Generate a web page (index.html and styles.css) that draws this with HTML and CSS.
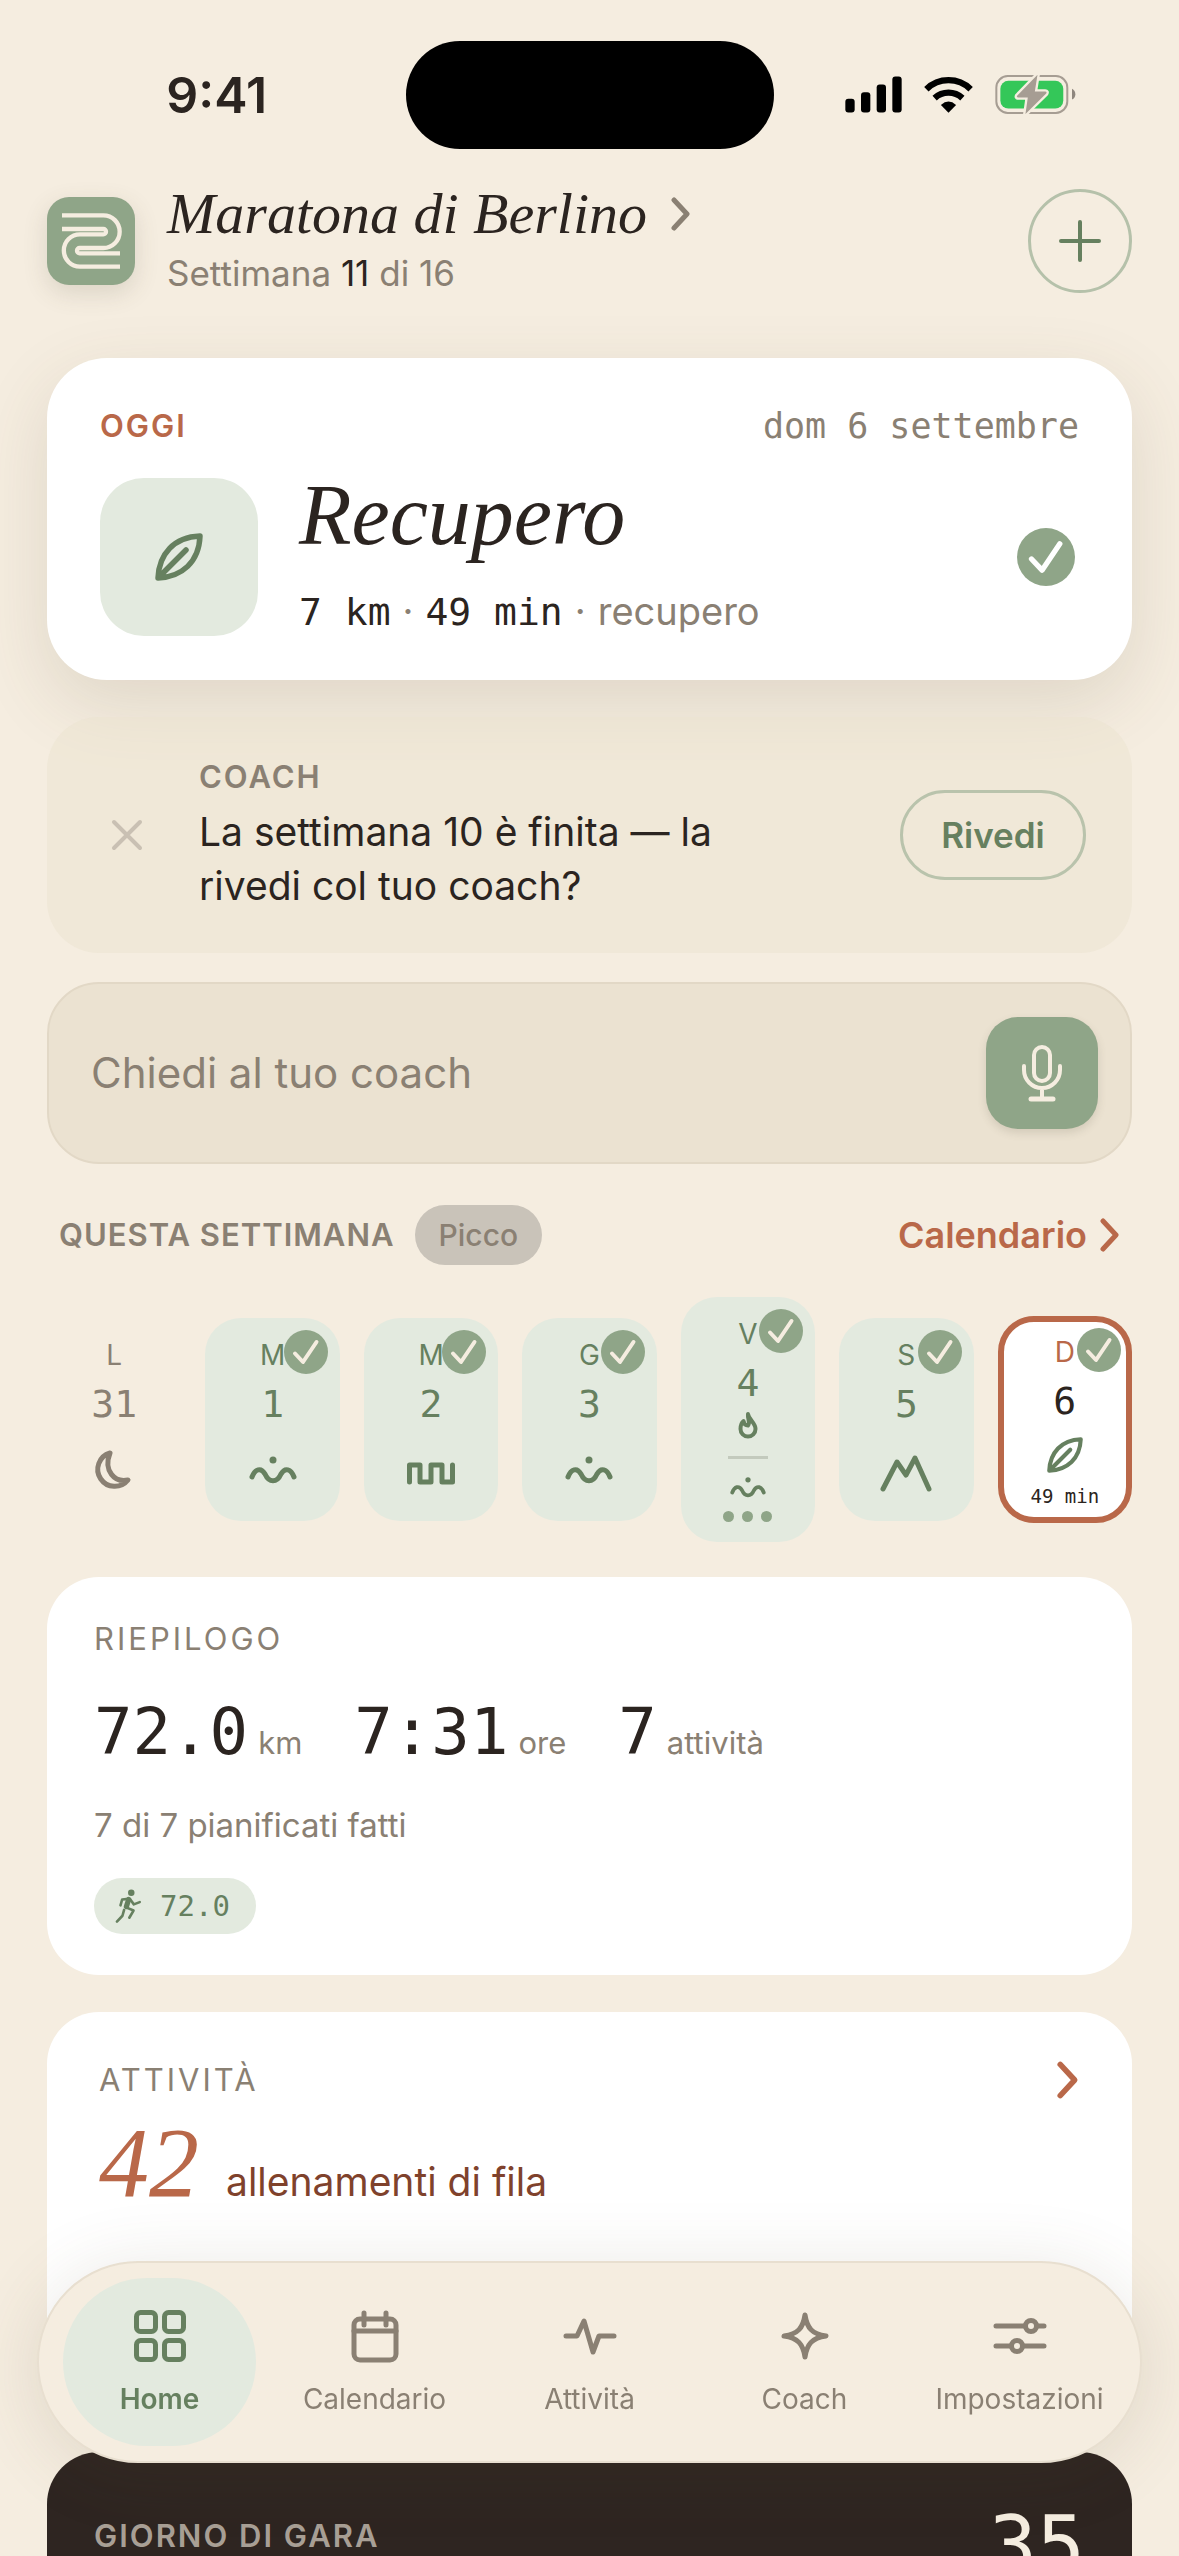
FILE: index.html
```html
<!DOCTYPE html>
<html lang="it">
<head>
<meta charset="utf-8">
<meta name="viewport" content="width=device-width, initial-scale=1">
<title>Maratona di Berlino</title>
<link rel="stylesheet" href="styles.css">
</head>
<body>
<svg class="defs" width="0" height="0" aria-hidden="true">
  <symbol id="check" viewBox="0 0 44 44"><path d="M11 23.500l8 8.500 13.500-20" fill="none" stroke="currentColor" stroke-width="4" stroke-linecap="round" stroke-linejoin="round"/></symbol>
  <symbol id="leaf" viewBox="0 0 48 48"><path d="M3 45C4 21 19 4 45 3c-1 26-18 41-42 42ZM5 43l26-26" fill="none" stroke="currentColor" stroke-width="5.500" stroke-linecap="round" stroke-linejoin="round"/></symbol>
  <symbol id="wave" viewBox="0 0 48 32"><circle cx="24" cy="5" r="3.500" fill="currentColor"/><path d="M3 22C6 14 12 12 16 19c4 9 12 9 16 0 4-7 10-5 13 3" fill="none" stroke="currentColor" stroke-width="5" stroke-linecap="round"/></symbol>
  <symbol id="chevron" viewBox="0 0 20 36"><path d="M3 4l13 14L3 32" fill="none" stroke="currentColor" stroke-width="5" stroke-linecap="round" stroke-linejoin="round"/></symbol>
</svg>

<div class="status">
  <time class="status-time">9:41</time>
  <div class="island"></div>
  <div class="status-icons">
    <svg class="cell" viewBox="46 50 171 110" aria-label="Segnale"><rect x="47" y="118" width="28" height="41" rx="9"/><rect x="94" y="98" width="28" height="61" rx="9"/><rect x="141" y="75" width="28" height="84" rx="9"/><rect x="188" y="51" width="28" height="108" rx="9"/></svg>
    <svg class="wifi" viewBox="280 50 152 112" aria-label="Wi-Fi"><g fill="none" stroke="#000" stroke-width="19"><path d="M289 90A96 96 0 0 1 423 90"/><path d="M314 117A62 62 0 0 1 398 117"/></g><path d="M333 138Q356 117 379 138L356 161Z"/></svg>
    <svg class="battery" viewBox="496 44 242 122" aria-label="Batteria in carica"><rect x="500" y="50" width="212" height="110" rx="34" fill="none" stroke="#a69d93" stroke-width="6"/><rect x="512" y="64" width="188" height="83" rx="24" fill="#34c759"/><path d="M726 88q10 5 10 16t-10 16z" fill="#8f877e"/><path d="M623 46L562 109q-2 5 3 5h29l-7 49 62-61q3-6-3-6h-31z" fill="#a69d93" stroke="#f5ede0" stroke-width="14" paint-order="stroke" stroke-linejoin="round"/></svg>
  </div>
</div>

<main class="page">
  <header class="header">
    <svg class="logo" viewBox="51 48 264 264" aria-hidden="true"><g fill="none" stroke="#f5ede0" stroke-width="13"><path d="M96 103H220A49 49 0 0 1 220 201H149A8 8 0 0 0 149 217H270"/><path d="M96 144H220A8 8 0 0 1 220 160H150A48 48 0 0 0 150 257H270"/></g></svg>
    <div class="plan">
      <h1 class="plan-title"><a href="#piano">Maratona di Berlino <svg class="chev" aria-hidden="true"><use href="#chevron"/></svg></a></h1>
      <p class="plan-week">Settimana <b>11</b> di 16</p>
    </div>
    <button class="add" aria-label="Aggiungi"><svg viewBox="0 0 44 44" aria-hidden="true"><path d="M22 3v38M3 22h38" stroke="currentColor" stroke-width="4" stroke-linecap="round"/></svg></button>
  </header>

  <section class="card today">
    <div class="today-top">
      <h2 class="label strong accent">OGGI</h2>
      <time class="today-date">dom 6 settembre</time>
    </div>
    <div class="today-row">
      <div class="today-tile"><svg aria-hidden="true"><use href="#leaf"/></svg></div>
      <div class="today-text">
        <h3 class="today-title">Recupero</h3>
        <p class="today-meta"><span class="mono">7 km</span><i>·</i><span class="mono">49 min</span><i>·</i><span class="muted">recupero</span></p>
      </div>
      <svg class="today-check" aria-label="Completato"><use href="#check"/></svg>
    </div>
  </section>

  <section class="coach">
    <button class="dismiss" aria-label="Chiudi"><svg viewBox="0 0 32 32" aria-hidden="true"><path d="M3 3l26 26M29 3L3 29" stroke="currentColor" stroke-width="4" stroke-linecap="round"/></svg></button>
    <div class="coach-text">
      <h2 class="label strong">COACH</h2>
      <p>La settimana 10 è finita — la rivedi col tuo coach?</p>
    </div>
    <button class="review">Rivedi</button>
  </section>

  <form class="ask">
    <input class="ask-input" type="text" placeholder="Chiedi al tuo coach" aria-label="Chiedi al tuo coach">
    <button class="mic" type="button" aria-label="Detta"><svg viewBox="0 0 56 58" fill="none" stroke="currentColor" stroke-width="4" stroke-linecap="round" aria-hidden="true"><rect x="20" y="3" width="16" height="34" rx="8"/><path d="M10 22v4a18 18 0 0 0 36 0v-4M28 44v10"/><path d="M17 55h22" stroke-width="5"/></svg></button>
  </form>

  <section>
    <div class="week-head">
      <h2 class="label strong">QUESTA SETTIMANA</h2>
      <span class="phase">Picco</span>
      <a class="week-link" href="#calendario">Calendario <svg class="chev" aria-hidden="true"><use href="#chevron"/></svg></a>
    </div>
    <ol class="week">
      <li class="day rest"><span class="dow">L</span><span class="num">31</span><svg class="day-icon" viewBox="0 0 48 48" aria-hidden="true"><path d="M20 6A17 17 0 1 0 38 33C25 36 13 24 20 6Z" fill="none" stroke="currentColor" stroke-width="5" stroke-linejoin="round"/></svg></li>
      <li class="day"><span class="dow">M</span><span class="num">1</span><svg class="day-icon" aria-hidden="true"><use href="#wave"/></svg><svg class="done" aria-label="Fatto"><use href="#check"/></svg></li>
      <li class="day"><span class="dow">M</span><span class="num">2</span><svg class="day-icon" viewBox="0 0 48 48" aria-hidden="true"><path d="M2.500 35V18H13V35H24V18H35V35H45.500V18" fill="none" stroke="currentColor" stroke-width="5" stroke-linecap="round" stroke-linejoin="round"/></svg><svg class="done" aria-label="Fatto"><use href="#check"/></svg></li>
      <li class="day"><span class="dow">G</span><span class="num">3</span><svg class="day-icon" aria-hidden="true"><use href="#wave"/></svg><svg class="done" aria-label="Fatto"><use href="#check"/></svg></li>
      <li class="day double"><span class="dow">V</span><span class="num">4</span><svg class="flame" viewBox="0 0 20 28" aria-hidden="true"><path d="M10 3C11 9 17.500 12 17.500 18A7.500 7.500 0 0 1 2.500 18C2.500 15 3 12 5.500 10C6 13 7.500 14.500 10 14.500C12.500 12 9.500 8 10 3Z" fill="none" stroke="currentColor" stroke-width="4" stroke-linejoin="round"/></svg><hr class="split"><svg class="small-wave" aria-hidden="true"><use href="#wave"/></svg><span class="dots"><i></i><i></i><i></i></span><svg class="done" aria-label="Fatto"><use href="#check"/></svg></li>
      <li class="day"><span class="dow">S</span><span class="num">5</span><svg class="day-icon wide" viewBox="0 0 52 48" aria-hidden="true"><path d="M3 42L17 15L26 28L35 11L49 42" fill="none" stroke="currentColor" stroke-width="5" stroke-linecap="round" stroke-linejoin="round"/></svg><svg class="done" aria-label="Fatto"><use href="#check"/></svg></li>
      <li class="day current" aria-current="date"><span class="dow">D</span><span class="num">6</span><svg class="day-leaf" aria-hidden="true"><use href="#leaf"/></svg><span class="dur">49 min</span><svg class="done" aria-label="Fatto"><use href="#check"/></svg></li>
    </ol>
  </section>

  <section class="card summary">
    <h2 class="label">RIEPILOGO</h2>
    <div class="stats">
      <p class="stat"><b>72.0</b><span>km</span></p>
      <p class="stat"><b>7:31</b><span>ore</span></p>
      <p class="stat"><b>7</b><span>attività</span></p>
    </div>
    <p class="planned">7 di 7 pianificati fatti</p>
    <span class="run"><svg viewBox="102 58 86 108" fill="none" stroke="currentColor" stroke-width="8" stroke-linecap="round" stroke-linejoin="round" aria-hidden="true"><circle cx="155" cy="71" r="10" fill="currentColor" stroke="none"/><path d="M122 110L127 92L146 90"/><path d="M147 92L140 114" stroke-width="16"/><path d="M152 92L163 107L181 100"/><path d="M141 117L162 126L149 148"/><path d="M133 124L128 142L111 160"/></svg>72.0</span>
  </section>

  <section class="card activity">
    <div class="activity-head">
      <h2 class="label">ATTIVITÀ</h2>
      <a href="#attivita" aria-label="Apri attività"><svg class="chev" aria-hidden="true"><use href="#chevron"/></svg></a>
    </div>
    <p class="streak"><b>42</b><span>allenamenti di fila</span></p>
  </section>

  <section class="race">
    <h2 class="label strong">GIORNO DI GARA</h2>
    <p class="race-days">35</p>
  </section>
</main>

<nav class="tabs">
  <a class="tab active" href="#home" aria-current="page"><svg viewBox="0 0 54 54" aria-hidden="true"><rect x="3.500" y="3.500" width="19" height="19" rx="4"/><rect x="31.500" y="3.500" width="19" height="19" rx="4"/><rect x="3.500" y="31.500" width="19" height="19" rx="4"/><rect x="31.500" y="31.500" width="19" height="19" rx="4"/></svg>Home</a>
  <a class="tab" href="#calendario"><svg viewBox="0 0 54 54" aria-hidden="true"><rect x="6" y="10" width="42" height="41" rx="6"/><path d="M6 22H48M16 4V16M38 4V16"/></svg>Calendario</a>
  <a class="tab" href="#attivita"><svg viewBox="0 0 54 54" aria-hidden="true"><path d="M3 27H14L21 12L30 43L36 27H51"/></svg>Attività</a>
  <a class="tab" href="#coach"><svg viewBox="0 0 54 54" aria-hidden="true"><path d="M27 6C29 19 34 25 48 27C34 29 29 35 27 48C25 35 20 29 6 27C20 25 25 19 27 6Z"/></svg>Coach</a>
  <a class="tab" href="#impostazioni"><svg viewBox="0 0 54 54" aria-hidden="true"><path d="M3 17H32M44 17H51M3 37H18M30 37H51"/><circle cx="38" cy="17" r="5.500"/><circle cx="24" cy="37" r="5.500"/></svg>Impostazioni</a>
</nav>
</body>
</html>
```
FILE: styles.css
```css
:root {
  --bg: #f5ede0;
  --ink: #2b2420;
  --muted: #8a8073;
  --sage: #8fa588;
  --green: #66805f;
  --mint: #e3eadf;
  --clay: #b96849;
  --sans: Inter, "Liberation Sans", sans-serif;
  --serif: "Liberation Serif", serif;
  --mono: "DejaVu Sans Mono", monospace;
}

* { box-sizing: border-box; }

body {
  margin: 0;
  height: 100vh;
  overflow: hidden;
  background: var(--bg);
  color: var(--ink);
  font-family: var(--sans);
  font-size: 32px;
}

h1, h2, h3, p, ol { margin: 0; padding: 0; font-weight: 400; }
ol { list-style: none; }
a { color: inherit; text-decoration: none; }
svg { display: block; flex: none; }
button {
  padding: 0;
  border: 0;
  background: none;
  font-family: inherit;
  display: flex;
  align-items: center;
  justify-content: center;
  flex: none;
}
.defs { position: absolute; }
.mono { font-family: var(--mono); }
.chev { width: 20px; height: 36px; }

/* Status bar */
.status {
  display: grid;
  grid-template-columns: 1fr 368px 1fr;
  align-items: center;
  height: 189px;
}
.status-time {
  justify-self: center;
  padding-left: 28px;
  font-size: 50px;
  font-weight: 600;
  line-height: 60px;
}
.island { height: 108px; border-radius: 54px; background: #000; }
.status-icons {
  display: flex;
  align-items: center;
  justify-content: flex-end;
  gap: 21px;
  padding-right: 103px;
}
.cell { width: 57px; height: 37px; }
.wifi { width: 51px; height: 37px; }
.battery { width: 81px; height: 41px; }

.page { padding: 0 47px; }

/* Header */
.header { display: flex; align-items: center; height: 104px; }
.logo {
  width: 88px;
  height: 88px;
  border-radius: 22px;
  background: var(--sage);
  box-shadow: 0 8px 24px rgba(90, 80, 60, .16);
}
.plan { flex: 1; padding-left: 32px; }
.plan-title {
  font: italic 58px/64px var(--serif);
}
.plan-title a { display: flex; align-items: center; gap: 24px; }
.plan-title .chev { color: var(--muted); }
.plan-week { font-size: 35px; line-height: 54px; color: var(--muted); }
.plan-week b { font-weight: 400; color: var(--ink); }
.add {
  width: 104px;
  height: 104px;
  border: 3px solid #b5c1aa;
  border-radius: 50%;
  color: var(--green);
}
.add svg { width: 44px; height: 44px; }

.label {
  font-size: 31px;
  line-height: 40px;
  letter-spacing: 2px;
  color: var(--muted);
}
.strong { font-weight: 600; }
.accent { color: var(--clay); }
.muted { color: var(--muted); }

.card { border-radius: 52px; background: #fff; }

/* Today */
.today {
  margin-top: 65px;
  padding: 44px 53px;
  border-radius: 60px;
  box-shadow: 0 24px 72px rgba(90, 75, 50, .14);
}
.today-top {
  display: flex;
  justify-content: space-between;
  align-items: center;
  height: 48px;
}
.today-date { font: 35px/48px var(--mono); color: var(--muted); }
.today-row {
  display: flex;
  align-items: center;
  height: 158px;
  margin-top: 28px;
  padding-right: 4px;
}
.today-tile {
  display: flex;
  align-items: center;
  justify-content: center;
  width: 158px;
  height: 158px;
  border-radius: 44px;
  background: var(--mint);
  color: var(--green);
}
.today-tile svg { width: 48px; height: 48px; }
.today-text { flex: 1; padding-left: 41px; }
.today-title { font: italic 86px/96px var(--serif); }
.today-meta {
  display: flex;
  align-items: baseline;
  margin-top: 12px;
  font-size: 38px;
  line-height: 72px;
}
.today-meta i { padding: 0 12px; font-style: normal; color: var(--muted); }
.today-check {
  width: 58px;
  height: 58px;
  border-radius: 50%;
  background: var(--sage);
  color: #fff;
}

/* Coach message */
.coach {
  display: flex;
  align-items: center;
  margin-top: 37px;
  padding: 40px 46px 40px 48px;
  border-radius: 52px;
  background: rgba(235, 228, 208, .5);
}
.dismiss { width: 64px; height: 64px; color: #c9c0b3; }
.dismiss svg { width: 32px; height: 32px; }
.coach-text { flex: 1; padding-left: 40px; }
.coach-text p {
  max-width: 600px;
  margin-top: 8px;
  font-size: 39px;
  line-height: 54px;
}
.review {
  width: 186px;
  height: 90px;
  border: 3px solid #b9c3ac;
  border-radius: 45px;
  color: var(--green);
  font-size: 35px;
  font-weight: 600;
}

/* Ask field */
.ask {
  display: flex;
  align-items: center;
  height: 182px;
  margin-top: 29px;
  padding: 0 32px 0 42px;
  border: 2px solid #e2d8c6;
  border-radius: 52px;
  background: #ebe2d1;
}
.ask-input {
  flex: 1;
  min-width: 0;
  padding: 0;
  border: 0;
  background: none;
  font: 42px/56px var(--sans);
  color: var(--ink);
}
.ask-input::placeholder { color: var(--muted); opacity: 1; }
.mic {
  width: 112px;
  height: 112px;
  border-radius: 32px;
  background: var(--sage);
  color: var(--bg);
  box-shadow: 0 4px 8px rgba(90, 80, 60, .16);
}
.mic svg { width: 56px; height: 58px; }

/* Week */
.week-head {
  display: flex;
  align-items: center;
  height: 60px;
  margin-top: 41px;
  padding: 0 12px;
}
.week-head .label { letter-spacing: 1px; }
.phase {
  margin-left: 20px;
  padding: 0 24px;
  border-radius: 30px;
  background: #c9c3b9;
  color: var(--muted);
  font-size: 30px;
  font-weight: 500;
  line-height: 60px;
}
.week-link {
  display: flex;
  align-items: center;
  gap: 13px;
  margin-left: auto;
  color: var(--clay);
  font-size: 36px;
  font-weight: 600;
}
.week {
  display: grid;
  grid-template-columns: repeat(7, 1fr);
  gap: 24px;
  align-items: center;
  margin-top: 32px;
}
.day {
  position: relative;
  display: flex;
  flex-direction: column;
  align-items: center;
  height: 203px;
  padding-top: 21px;
  border-radius: 36px;
  background: var(--mint);
  color: var(--green);
}
.rest { background: none; color: var(--muted); }
.dow { font-size: 28px; line-height: 32px; }
.num { margin-top: 9px; font: 38px/48px var(--mono); }
.day-icon { width: 48px; height: 48px; margin-top: 19px; }
.wide { width: 52px; }
.done {
  position: absolute;
  top: 12px;
  right: 12px;
  width: 44px;
  height: 44px;
  border-radius: 50%;
  background: var(--sage);
  color: var(--bg);
}
.double { height: 245px; }
.flame { width: 20px; height: 28px; margin-top: 4px; }
.split { width: 40px; height: 3px; margin: 17px 0; border: 0; background: #c3cabd; }
.small-wave { width: 36px; height: 24px; }
.dots { display: flex; gap: 8px; margin-top: 11px; }
.dots i { width: 11px; height: 11px; border-radius: 50%; background: var(--sage); }
.current {
  height: 207px;
  padding-top: 14px;
  border: 6px solid var(--clay);
  background: #fff;
}
.current .dow { color: var(--clay); }
.current .num { color: var(--ink); }
.current .done { top: 6px; right: 5px; }
.day-leaf { width: 36px; height: 36px; margin-top: 12px; }
.dur { margin-top: 11px; font: 19px/24px var(--mono); color: var(--ink); }

/* Summary */
.summary {
  display: flex;
  flex-direction: column;
  align-items: flex-start;
  gap: 33px;
  margin-top: 35px;
  padding: 42px 47px 41px;
}
.summary .label, .activity .label { letter-spacing: 3px; }
.stats { display: flex; gap: 52px; }
.stat { display: flex; align-items: baseline; gap: 10px; }
.stat b { font: 64px/80px var(--mono); }
.stat span { font-size: 31px; line-height: 40px; color: var(--muted); }
.planned { font-size: 33px; line-height: 40px; color: var(--muted); }
.run {
  display: flex;
  align-items: center;
  gap: 18px;
  height: 56px;
  padding: 0 26px 0 20px;
  border-radius: 28px;
  background: var(--mint);
  color: var(--green);
  font: 29px/56px var(--mono);
}
.run svg { width: 28px; height: 36px; }

/* Activity */
.activity { min-height: 403px; margin-top: 37px; padding: 44px 52px; }
.activity-head {
  display: flex;
  align-items: center;
  justify-content: space-between;
  height: 48px;
  color: var(--clay);
}
.activity-head .chev { width: 24px; height: 40px; }
.streak { display: flex; align-items: baseline; gap: 27px; margin-top: 9px; }
.streak b { font: italic 100px/100px var(--serif); color: var(--clay); }
.streak span { font-size: 39px; line-height: 48px; color: #7f422c; }

/* Race day */
.race {
  display: flex;
  justify-content: space-between;
  align-items: flex-start;
  margin-top: 37px;
  padding: 54px 47px 48px;
  border-radius: 52px;
  background: #2e2521;
}
.race .label { line-height: 60px; color: #a89f95; }
.race-days { font: 80px/80px var(--mono); color: var(--bg); }

/* Tab bar */
.tabs {
  position: fixed;
  right: 37px;
  bottom: 93px;
  left: 37px;
  display: grid;
  grid-template-columns: repeat(5, 1fr);
  gap: 22px;
  padding: 15px 24px;
  border: 2px solid #e8dfd0;
  border-radius: 101px;
  background: var(--bg);
  box-shadow: 0 8px 72px rgba(90, 75, 50, .14);
}
.tab {
  display: flex;
  flex-direction: column;
  align-items: center;
  gap: 20px;
  height: 168px;
  padding-top: 31px;
  border-radius: 84px;
  color: var(--muted);
  font-size: 28px;
  line-height: 32px;
}
.tab svg {
  width: 54px;
  height: 54px;
  fill: none;
  stroke: currentColor;
  stroke-width: 5px;
  stroke-linecap: round;
  stroke-linejoin: round;
}
.active { background: var(--mint); color: var(--green); font-weight: 600; }
```
